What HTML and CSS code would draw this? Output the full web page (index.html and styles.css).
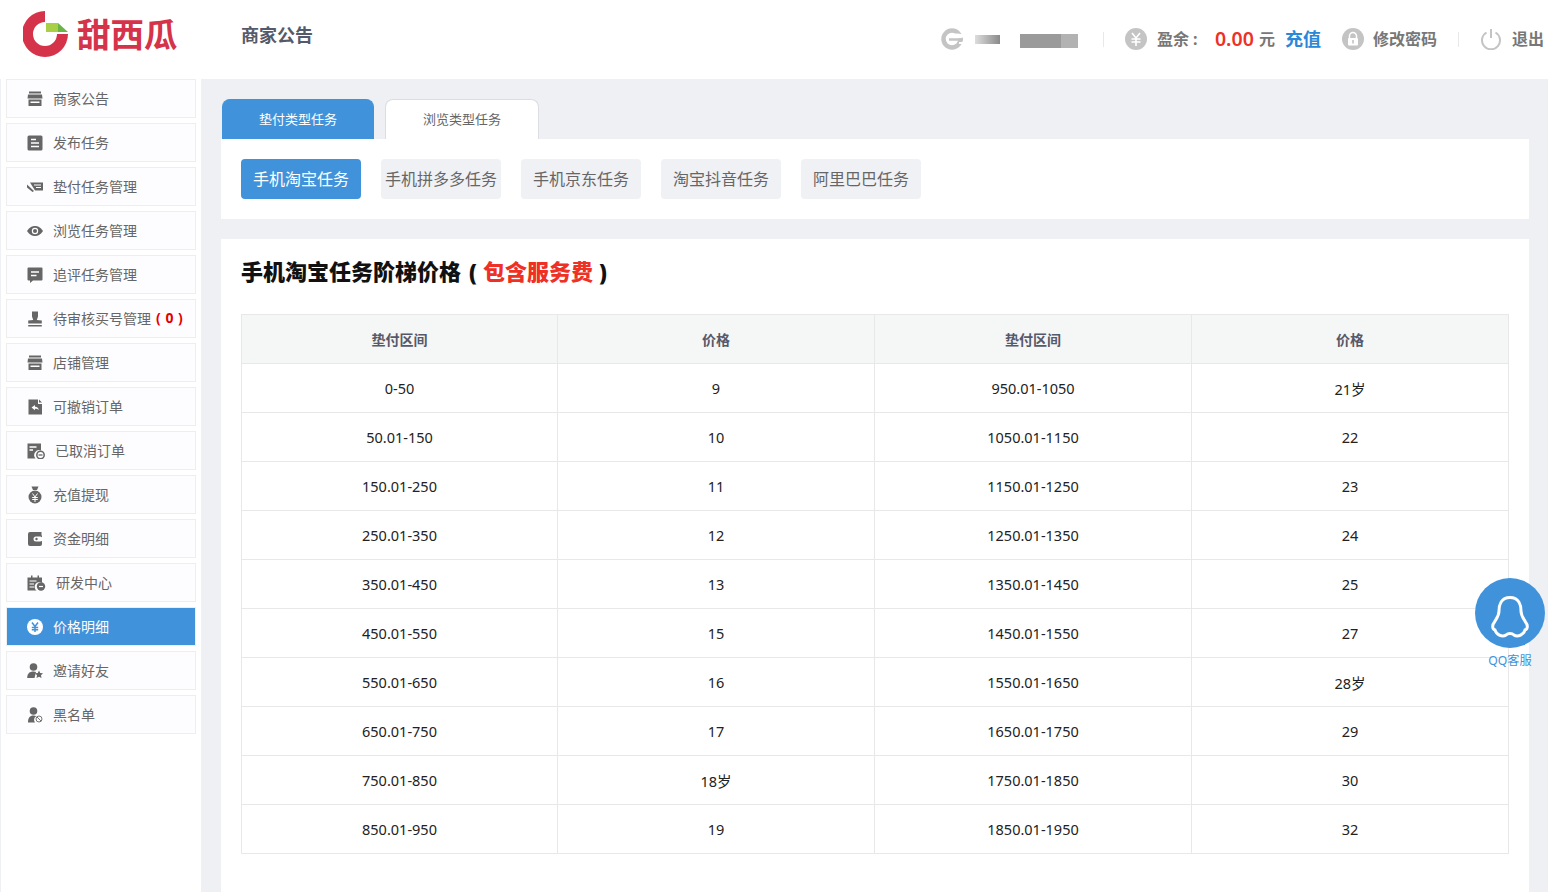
FILE: index.html
```html
<!DOCTYPE html>
<html>
<head>
    <title>价格明细 - 甜西瓜</title>
    <link rel="stylesheet" href="styles.css">
</head>
<body>
    <div class="header">
        <div class="logo">
            <svg class="logo-mark" viewBox="0 0 46 46" width="46" height="46">
                <path d="M22 0A23 23 0 1 0 45 23L34 23A12 12 0 1 1 22 11Z" fill="#d5334a"/>
                <path d="M23 12H35V21H23Z" fill="#a9cf46"/>
                <path d="M35 12L45 21H35Z" fill="#6bb345"/>
            </svg>
            <span class="logo-text">甜西瓜</span>
        </div>
        <div class="page-title">商家公告</div>
        <div class="user-bar">
            <svg class="top-ico" viewBox="0 0 22 22"><circle cx="11" cy="11" r="8.500" fill="none" stroke="#c4c4c4" stroke-width="4.500"/><ellipse cx="16" cy="8" rx="7" ry="2.500" fill="#fff"/><path d="M8 11.500h14" stroke="#c4c4c4" stroke-width="2.500"/><path d="M18 15h4" stroke="#fff" stroke-width="2"/></svg>
            <span class="smudge smudge-a"></span>
            <span class="smudge smudge-b"></span>
            <span class="sep sep-a"></span>
            <svg class="top-ico" viewBox="0 0 22 22"><circle cx="11" cy="11" r="11" fill="#c4c4c4"/><path d="M7 5l4 5 4-5M6.500 11h9M6.500 14h9M11 10v8" fill="none" stroke="#fff" stroke-width="1.600"/></svg>
            <span class="top-text balance-label">盈余&nbsp;:</span>
            <span class="money">0.00</span>
            <span class="top-text unit">元</span>
            <a class="recharge">充值</a>
            <svg class="top-ico lock-ico" viewBox="0 0 22 22"><circle cx="11" cy="11" r="11" fill="#c4c4c4"/><path d="M7.500 10V8a3.500 3.500 0 0 1 7 0v2" fill="none" stroke="#fff" stroke-width="1.500"/><rect x="6" y="10" width="10" height="7.500" rx="1" fill="#fff"/><rect x="10.200" y="12" width="1.600" height="3.500" fill="#c4c4c4"/></svg>
            <span class="top-text pwd">修改密码</span>
            <span class="sep sep-b"></span>
            <svg class="top-ico" viewBox="0 0 22 22"><path d="M6.500 4.500a9 9 0 1 0 9 0" fill="none" stroke="#c4c4c4" stroke-width="2"/><path d="M11 1v9" stroke="#c4c4c4" stroke-width="2"/></svg>
            <span class="top-text logout">退出</span>
        </div>
    </div>

    <div class="layout">
        <div class="sidebar">
            <a class="nav-item"><svg class="ico" viewBox="0 0 16 16"><path d="M2 .5h12V2.500H2zM1 3.500h14l.5 4H.5zM1.500 8.500h13v6.500h-13z" fill="#666"/><path d="M3.500 10.500h9v1.500h-9z" fill="#fff"/></svg><span>商家公告</span></a>
            <a class="nav-item"><svg class="ico" viewBox="0 0 16 16"><rect x=".5" y=".5" width="15" height="15" rx="1.500" fill="#666"/><path d="M4 4.500h5M4 8h8M4 11.500h8" stroke="#fff" stroke-width="1.600"/></svg><span>发布任务</span></a>
            <a class="nav-item"><svg class="ico" viewBox="0 0 16 16"><path d="M3 3.500H16V11.500H8zM0 5.500L7 12 5.500 13 0 8.500z" fill="#666"/><path d="M7 6h7M9 8.500h5" stroke="#fff" stroke-width="1.200"/></svg><span>垫付任务管理</span></a>
            <a class="nav-item"><svg class="ico" viewBox="0 0 16 16"><path d="M0 8C2.500 4 5.500 3 8 3S13.500 4 16 8C13.500 12 10.500 13 8 13S2.500 12 0 8z" fill="#666"/><circle cx="8" cy="8" r="3.200" fill="#fff"/><circle cx="8" cy="8" r="2" fill="#666"/></svg><span>浏览任务管理</span></a>
            <a class="nav-item"><svg class="ico" viewBox="0 0 16 16"><path d="M1.500 .5h13a1 1 0 0 1 1 1v11a1 1 0 0 1-1 1H6L3 16V13.500H1.500a1 1 0 0 1-1-1V1.500a1 1 0 0 1 1-1z" fill="#666"/><path d="M4 5h8M4 8.500h5.500" stroke="#fff" stroke-width="1.600"/></svg><span>追评任务管理</span></a>
            <a class="nav-item"><svg class="ico" viewBox="0 0 16 16"><path d="M5 .5h6v5l-1.200 3.500 5 .5v3H1.200v-3l5-.5L5 5.500z" fill="#666"/><path d="M1.200 14h13.600v1.500H1.200z" fill="#666"/></svg><span>待审核买号管理</span><span class="count">( 0 )</span></a>
            <a class="nav-item"><svg class="ico" viewBox="0 0 16 16"><path d="M2 .5h12V2.500H2zM1 3.500h14l.5 4H.5zM1.500 8.500h13v6.500h-13z" fill="#666"/><path d="M3.500 10.500h9v1.500h-9z" fill="#fff"/></svg><span>店铺管理</span></a>
            <a class="nav-item"><svg class="ico" viewBox="0 0 16 16"><path d="M1.500 .5h9.500v4.500H15V15.500H1.500z" fill="#666"/><path d="M12 .5l3 3h-3z" fill="#666"/><path d="M4.500 8.500L8 6v1.700c2.500 0 3.500 1.300 3.800 3.300-1-1-2.200-1.400-3.800-1.300V11.300z" fill="#fff"/></svg><span>可撤销订单</span></a>
            <a class="nav-item wide-a"><svg class="ico" viewBox="0 0 18 16"><path d="M.5 .5H14V7.500A5 5 0 0 0 8.500 15.500H.5z" fill="#666"/><path d="M2.500 4h7M2.500 7h3.500" stroke="#fff" stroke-width="1.300"/><circle cx="13.500" cy="12" r="3.700" fill="none" stroke="#666" stroke-width="1.500"/><path d="M11.500 12h4" stroke="#666" stroke-width="1.300"/></svg><span>已取消订单</span></a>
            <a class="nav-item"><svg class="ico ico-tall" viewBox="0 0 16 18"><path d="M4.500 .5h7L10 4H6z" fill="#666"/><circle cx="8" cy="11" r="6.500" fill="#666"/><path d="M5.500 7.500l2.500 3.500 2.500-3.500M5.200 11.500h5.600M5.200 13.500h5.600M8 11v5" fill="none" stroke="#fff" stroke-width="1"/></svg><span>充值提现</span></a>
            <a class="nav-item"><svg class="ico" viewBox="0 0 16 16"><path d="M3 1h11.500v3.500H15v8.500a2 2 0 0 1-2 2H3A2 2 0 0 1 1 13V3a2 2 0 0 1 2-2z" fill="#666"/><rect x="6.500" y="5.500" width="9" height="5" rx="2.500" fill="#fff"/><circle cx="9.500" cy="8" r="1.200" fill="#666"/></svg><span>资金明细</span></a>
            <a class="nav-item wide-b"><svg class="ico" viewBox="0 0 19 16"><path d="M.5 2.500H4V.5h1.500v2h5v-2H12v2h3V8A4.500 4.500 0 0 0 9.500 15.500H.5z" fill="#666"/><path d="M2.500 6h7M2.500 9h4.500M2.500 12h4.500" stroke="#fff" stroke-width="1.200"/><circle cx="14" cy="11.500" r="4.200" fill="#666"/><path d="M12 11.500h4" stroke="#fff" stroke-width="1.200"/></svg><span>研发中心</span></a>
            <a class="nav-item active"><svg class="ico" viewBox="0 0 16 16"><circle cx="8" cy="8" r="8" fill="#fff"/><path d="M5 3.500l3 4 3-4M4.800 8.500h6.400M4.800 10.700h6.400M8 7.500v5.500" fill="none" stroke="#4093da" stroke-width="1.500"/></svg><span>价格明细</span></a>
            <a class="nav-item"><svg class="ico" viewBox="0 0 16 16"><circle cx="6.500" cy="4" r="3.800" fill="#666"/><path d="M.2 15c0-4.500 2.500-6.500 6.300-6.500 1 0 1.800.2 2.500.5L7.500 15z" fill="#666"/><path d="M12 7.500l1.200 2.500 2.800.3-2 1.900.5 2.800-2.500-1.300-2.500 1.300.5-2.800-2-1.900 2.800-.3z" fill="#666"/></svg><span>邀请好友</span></a>
            <a class="nav-item"><svg class="ico" viewBox="0 0 16 16"><circle cx="6.500" cy="4" r="3.800" fill="#666"/><path d="M1 15.500c0-4.500 1.800-7 5.500-7 1.200 0 2 .3 2.800.8A4 4 0 0 0 8 15.500z" fill="#666"/><circle cx="12" cy="12" r="3" fill="none" stroke="#777" stroke-width="1"/><path d="M10 10l4 4" stroke="#777" stroke-width="1"/></svg><span>黑名单</span></a>
        </div>

        <div class="main">
            <div class="tabs">
                <a class="tab on">垫付类型任务</a>
                <a class="tab">浏览类型任务</a>
            </div>
            <div class="panel type-panel">
                <a class="type-btn on">手机淘宝任务</a>
                <a class="type-btn">手机拼多多任务</a>
                <a class="type-btn">手机京东任务</a>
                <a class="type-btn">淘宝抖音任务</a>
                <a class="type-btn">阿里巴巴任务</a>
            </div>
            <div class="panel price-panel">
                <h2>手机淘宝任务阶梯价格<span class="paren">(</span><span class="red">包含服务费</span><span class="paren paren-end">)</span></h2>
                <table class="price-table">
                    <tr><th>垫付区间</th><th>价格</th><th>垫付区间</th><th>价格</th></tr>
                    <tr><td>0-50</td><td>9</td><td>950.01-1050</td><td>21岁</td></tr>
                    <tr><td>50.01-150</td><td>10</td><td>1050.01-1150</td><td>22</td></tr>
                    <tr><td>150.01-250</td><td>11</td><td>1150.01-1250</td><td>23</td></tr>
                    <tr><td>250.01-350</td><td>12</td><td>1250.01-1350</td><td>24</td></tr>
                    <tr><td>350.01-450</td><td>13</td><td>1350.01-1450</td><td>25</td></tr>
                    <tr><td>450.01-550</td><td>15</td><td>1450.01-1550</td><td>27</td></tr>
                    <tr><td>550.01-650</td><td>16</td><td>1550.01-1650</td><td>28岁</td></tr>
                    <tr><td>650.01-750</td><td>17</td><td>1650.01-1750</td><td>29</td></tr>
                    <tr><td>750.01-850</td><td>18岁</td><td>1750.01-1850</td><td>30</td></tr>
                    <tr><td>850.01-950</td><td>19</td><td>1850.01-1950</td><td>32</td></tr>
                </table>
            </div>
        </div>
    </div>

    <a class="qq-float">
        <svg viewBox="0 0 70 70" width="70" height="70">
            <circle cx="35" cy="35" r="35" fill="#4093da"/>
            <path d="M35 19.500C26 19.500 24 27 24 33C24 38 21 41 19.500 44C17 47 17 51 20 52C21 56 27 60 31 57C33 55 37 55 39 57C43 60 49 56 50 52C53 51 53 47 50.500 44C49 41 46 38 46 33C46 27 44 19.500 35 19.500Z" fill="none" stroke="#fff" stroke-width="3"/>
        </svg>
        <span>QQ客服</span>
    </a>
</body>
</html>
```

FILE: styles.css
```css
* {
    box-sizing: border-box;
}
html, body {
    height: 892px;
    overflow: hidden;
}
body {
    margin: 0;
    font-family: "Noto Sans", "Noto Sans CJK SC", sans-serif;
    background: #fff;
    color: #333;
    position: relative;
}
.header {
    height: 79px;
    display: flex;
    align-items: flex-start;
    background: #fff;
    overflow: hidden;
}
.logo {
    width: 241px;
    padding: 10px 0 0 23px;
    display: flex;
    align-items: center;
    height: 57px;
}
.logo-mark {
    flex: none;
}
.logo-text {
    margin-left: 8px;
    font-size: 33.500px;
    font-weight: 700;
    line-height: 46px;
    color: #d5334a;
}
.page-title {
    margin-top: 22px;
    font-size: 18px;
    line-height: 26px;
    font-weight: 700;
    color: #555a6a;
}
.user-bar {
    margin-left: auto;
    height: 78px;
    padding-right: 4px;
    display: flex;
    align-items: center;
}
.top-ico {
    width: 22px;
    height: 22px;
    flex: none;
}
.smudge {
    background: #a0a0a0;
    display: block;
}
.smudge-a {
    width: 25px;
    height: 9px;
    margin-left: 12px;
    background: linear-gradient(90deg, #ddd, #8a8a8a);
}
.smudge-b {
    width: 58px;
    height: 14px;
    margin: 4px 0 0 20px;
    background: linear-gradient(90deg, #9a9a9a 70%, #b2b2b2 70%);
}
.sep {
    width: 1px;
    height: 15px;
    background: #e8e8e8;
}
.sep-a {
    margin: 0 21px 0 25px;
}
.sep-b {
    margin: 0 21px;
}
.top-text {
    font-size: 16px;
    font-weight: 700;
    color: #777;
    margin-bottom: 2px;
}
.balance-label {
    margin-left: 10px;
    width: 58px;
    white-space: nowrap;
}
.money {
    width: 40px;
    font-size: 19.500px;
    font-weight: 600;
    white-space: nowrap;
    color: #ee3124;
    margin-bottom: 2px;
}
.unit {
    margin-left: 4px;
}
.recharge {
    margin: 0 21px 2px 10px;
    font-size: 18px;
    font-weight: 700;
    color: #2a88d8;
}
.pwd {
    margin-left: 9px;
}
.logout {
    margin-left: 10px;
}
.layout {
    display: flex;
    height: 813px;
}
.sidebar {
    width: 201px;
    flex: none;
    border-left: 1px solid #eff0f4;
    padding-left: 5px;
}
.nav-item {
    display: flex;
    align-items: center;
    width: 190px;
    height: 39px;
    margin-bottom: 5px;
    padding-left: 20px;
    background: #fdfdff;
    border: 1px solid #eeeeee;
    font-size: 14px;
    color: #666;
}
.nav-item span {
    margin-bottom: 2px;
}
.ico {
    width: 16px;
    height: 16px;
    margin-right: 10px;
    flex: none;
}
.ico-tall {
    height: 18px;
}
.wide-a .ico {
    width: 18px;
}
.wide-b .ico {
    width: 19px;
}
.nav-item .count {
    margin-left: 5px;
    font-weight: 700;
    letter-spacing: .5px;
    color: #e60000;
}
.nav-item.active {
    background: #4093da;
    color: #fff;
}
.main {
    flex: 1;
    background: #eff0f4;
    padding: 20px 19px 0 20px;
}
.tabs {
    display: flex;
    gap: 11px;
    padding-left: 1px;
    height: 40px;
}
.tab {
    width: 154px;
    height: 40px;
    line-height: 38px;
    text-align: center;
    font-size: 13px;
    color: #666;
    background: #fff;
    border: 1px solid #dcdde2;
    border-bottom: none;
    border-radius: 8px 8px 0 0;
}
.tab.on {
    width: 152px;
    background: #4093da;
    border-color: #4093da;
    color: #fff;
}
.panel {
    background: #fff;
    padding: 20px;
}
.type-panel {
    display: flex;
    gap: 20px;
    height: 80px;
    margin-bottom: 20px;
}
.type-btn {
    width: 120px;
    height: 40px;
    line-height: 40px;
    text-align: center;
    font-size: 16px;
    color: #666;
    background: #f0f1f5;
    border-radius: 4px;
}
.type-btn.on {
    background: #4093da;
    color: #fff;
}
.price-panel {
    height: 653px;
}
.price-panel h2 {
    margin: -3px 0 28px;
    font-size: 22px;
    line-height: 30px;
    font-weight: 900;
    color: #111;
}
.paren {
    margin: 0 6px 0 8px;
}
.paren-end {
    margin: 0 0 0 6px;
}
.red {
    color: #ee3124;
}
.price-table {
    width: 100%;
    table-layout: fixed;
    border-collapse: collapse;
    font-size: 14.500px;
    text-align: center;
}
.price-table th,
.price-table td {
    height: 49px;
    padding: 0;
    border: 1px solid #e8e8e8;
}
.price-table th {
    background: #f5f6f6;
    font-size: 14px;
    font-weight: 700;
    color: #555a6a;
}
.price-table th:nth-child(1) {
    width: 316px;
}
.price-table th:nth-child(2),
.price-table th:nth-child(3) {
    width: 317px;
}
.price-table td {
    color: #222;
}
.qq-float {
    position: absolute;
    left: 1475px;
    top: 578px;
    width: 70px;
    text-align: center;
    font-size: 12.200px;
    line-height: 18px;
    color: #4093da;
}
.qq-float svg {
    display: block;
    margin-bottom: 4px;
}
```
